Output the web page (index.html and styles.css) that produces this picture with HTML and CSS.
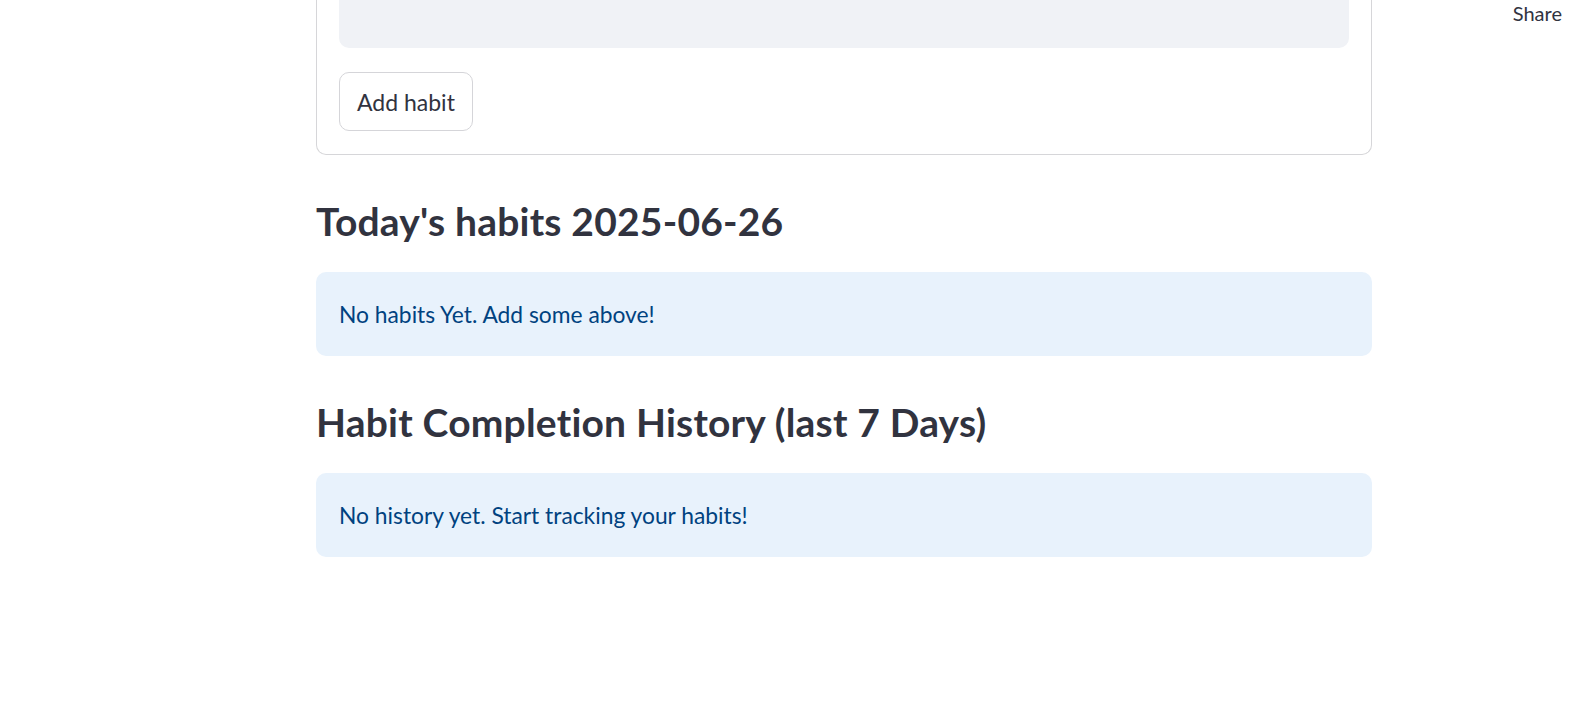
FILE: index.html
```html
<!DOCTYPE html>
<html>
<head>
<meta charset="utf-8">
<link rel="stylesheet" href="styles.css">
</head>
<body>
<div class="header"><span class="share">Share</span></div>
<main class="main">
  <section class="form">
    <div class="textarea"></div>
    <button class="btn">Add habit</button>
  </section>
  <h3 class="heading">Today's habits 2025-06-26</h3>
  <div class="info">No habits Yet. Add some above!</div>
  <h3 class="heading">Habit Completion History (last 7 Days)</h3>
  <div class="info">No history yet. Start tracking your habits!</div>
</main>
</body>
</html>
```
FILE: styles.css
```css
html, body {
  margin: 0;
  padding: 0;
  background: #ffffff;
}
body {
  font-family: Lato, "Noto Sans", sans-serif;
  color: #31333f;
  width: 1588px;
  height: 712px;
  overflow: hidden;
  position: relative;
}
.header {
  position: absolute;
  top: 0;
  right: 0;
  padding: 0 26px 0 0;
}
.share {
  font-size: 20px;
  line-height: 26px;
  color: #31333f;
}
.main {
  width: 1056px;
  margin-left: 316px;
  display: flex;
  flex-direction: column;
}
.form {
  border: 1px solid #d6d6d9;
  border-top: none;
  border-radius: 0 0 10px 10px;
  padding: 0 22px 23px;
  display: flex;
  flex-direction: column;
  align-items: flex-start;
}
.textarea {
  align-self: stretch;
  height: 48px;
  background: #f0f2f6;
  border-radius: 0 0 10px 10px;
}
.btn {
  margin-top: 24px;
  height: 59px;
  padding: 0 17px;
  background: #ffffff;
  border: 1px solid #d5d5d9;
  border-radius: 10px;
  font-family: inherit;
  font-size: 23px;
  color: #31333f;
}
.heading {
  margin: 43px 0 28px;
  font-size: 39px;
  line-height: 46px;
  letter-spacing: 0.2px;
  font-weight: 700;
  color: #31333f;
}
.info {
  height: 84px;
  box-sizing: border-box;
  padding: 28px 23px 0;
  background: #e8f2fc;
  border-radius: 10px;
  font-size: 22.8px;
  line-height: 28px;
  color: #004280;
}
```
